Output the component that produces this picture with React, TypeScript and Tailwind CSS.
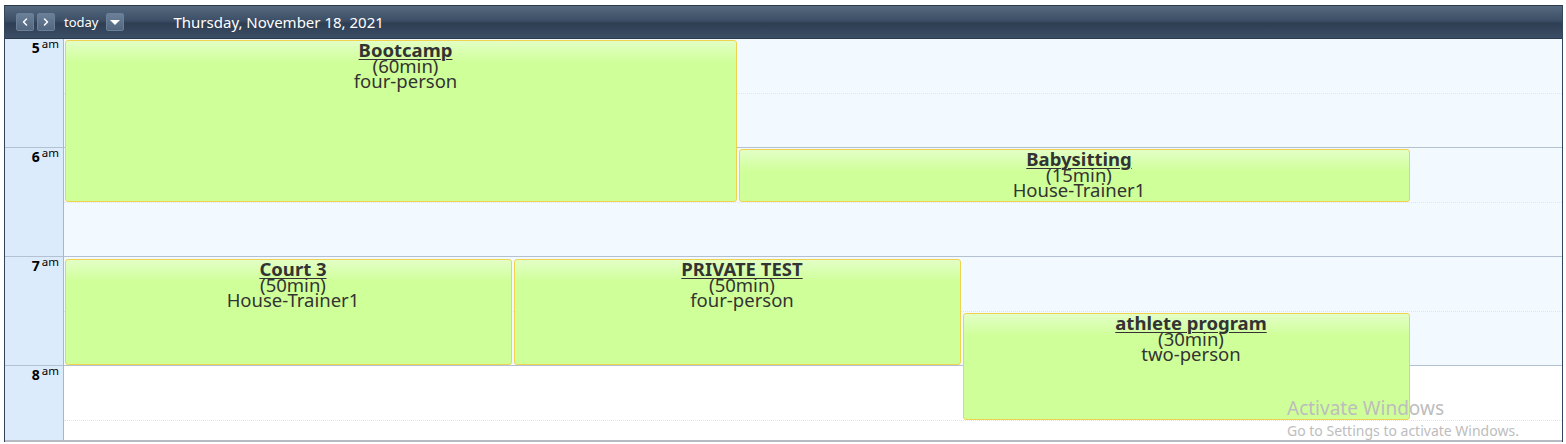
import { ChevronLeft, ChevronRight } from 'lucide-react';

interface CalEvent {
  title: string;
  duration: string;
  who: string;
  left: number;
  top: number;
  width: number;
  height: number;
}

const events: CalEvent[] = [
  { title: 'Bootcamp', duration: '(60min)', who: 'four-person', left: 1, top: 1, width: 672, height: 162 },
  { title: 'Babysitting', duration: '(15min)', who: 'House-Trainer1', left: 675, top: 110, width: 671, height: 53 },
  { title: 'Court 3', duration: '(50min)', who: 'House-Trainer1', left: 1, top: 220, width: 447, height: 106 },
  { title: 'PRIVATE TEST', duration: '(50min)', who: 'four-person', left: 450, top: 220, width: 447, height: 106 },
  { title: 'athlete program', duration: '(30min)', who: 'two-person', left: 899, top: 274, width: 447, height: 107 },
];

const hours = ['5', '6', '7', '8'];

export default function App() {
  return (
    <div className="relative h-[444px] w-[1566px] overflow-hidden bg-white font-['Noto_Sans',sans-serif]">
      <div className="pl-[4px] pt-[5px]">
        <div className="flex h-[437px] w-[1559px] flex-col border-x border-[#33445a]">
          <CalendarHeader />
          <div className="flex flex-1 overflow-hidden border-b-2 border-[#b6bac2]">
            <div className="w-[59px] shrink-0 border-r border-[#a7b6c9] bg-[#dcebfc]">
              {hours.map((h) => (
                <div
                  key={h}
                  className="h-[109px] border-b border-[#b3c1d1] pr-[4px] pt-[2px] text-right text-[14px] leading-[14px] text-black"
                >
                  <span className="font-bold">{h}</span>
                  <span className="relative top-[-5px] ml-[2px] text-[11.5px]">am</span>
                </div>
              ))}
            </div>
            <div className="relative flex-1">
              {hours.map((h, i) => (
                <div key={h} className={['h-[109px] border-b border-[#b3c1d1]', i < 3 ? 'bg-[#f3faff]' : 'bg-white'].join(' ')}>
                  <div className="h-[55px] border-b border-dotted border-[#dfe5ec]" />
                </div>
              ))}
              {events.map((ev) => (
                <EventBox key={ev.title} ev={ev} />
              ))}
            </div>
          </div>
        </div>
      </div>

      <div className="pointer-events-none absolute left-[1287px] top-[396px] text-[#bdbdbd]">
        <p className="text-[19px] leading-[25px]">Activate Windows</p>
        <p className="text-[14px] leading-[19px]">Go to Settings to activate Windows.</p>
      </div>
    </div>
  );
}

function CalendarHeader() {
  return (
    <div className="flex h-[34px] shrink-0 items-center border-y border-[#2a394c] bg-[linear-gradient(#55697f,#3c4f66_45%,#2e3e53_55%,#3b4e66)] pl-[11px] text-white">
      <HeaderButton>
        <ChevronLeft size={12} strokeWidth={3} />
      </HeaderButton>
      <HeaderButton className="ml-[3px]">
        <ChevronRight size={12} strokeWidth={3} />
      </HeaderButton>
      <span className="ml-[9px] text-[13px] leading-[18px]">today</span>
      <HeaderButton className="ml-[8px]">
        <span className="h-0 w-0 border-x-[5px] border-t-[5px] border-x-transparent border-t-white" />
      </HeaderButton>
      <span className="ml-[49px] text-[15px] leading-[20px]">Thursday, November 18, 2021</span>
    </div>
  );
}

function HeaderButton({ children, className = '' }: { children: React.ReactNode; className?: string }) {
  return (
    <button
      type="button"
      className={[
        'flex h-[18px] w-[18px] items-center justify-center rounded-[2px] border border-[#6b7f97] bg-[linear-gradient(#6a7f98,#52667f)] text-white',
        className,
      ].join(' ')}
    >
      {children}
    </button>
  );
}

function EventBox({ ev }: { ev: CalEvent }) {
  return (
    <div
      className="absolute overflow-hidden rounded-[3px] border border-[#efd34e] bg-[linear-gradient(#e3ffc6,#cfff99_22px,#cfff99)] pl-[9px] pt-[1px] text-center text-[18.5px] leading-[15.5px] text-[#333]"
      style={{ left: ev.left, top: ev.top, width: ev.width, height: ev.height }}
    >
      <div className="font-bold underline decoration-1 underline-offset-[2px]">{ev.title}</div>
      <div>{ev.duration}</div>
      <div>{ev.who}</div>
    </div>
  );
}
